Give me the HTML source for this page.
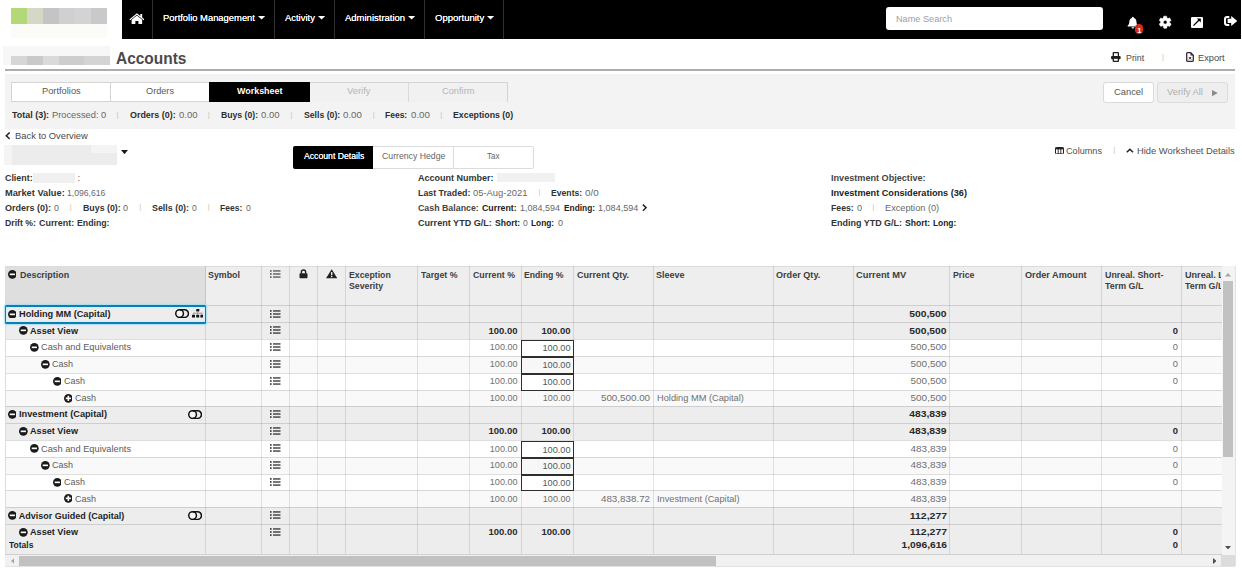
<!DOCTYPE html>
<html><head><meta charset="utf-8"><title>Accounts</title>
<style>
html,body{margin:0;padding:0;background:#fff;}
body{width:1242px;height:572px;position:relative;overflow:hidden;font-family:"Liberation Sans",sans-serif;}
.t{position:absolute;white-space:nowrap;}
.b{position:absolute;display:block;}
</style></head><body>
<div class="b" style="left:121.6px;top:0px;width:1119.6px;height:38.5px;background:#000;"></div>
<div class="b" style="left:11px;top:8px;width:16px;height:16px;background:#b3d877;"></div>
<div class="b" style="left:27px;top:8px;width:16px;height:16px;background:#d3d9c6;"></div>
<div class="b" style="left:43px;top:8px;width:16px;height:16px;background:#c4c4c6;"></div>
<div class="b" style="left:59px;top:8px;width:16px;height:16px;background:#d0d0d2;"></div>
<div class="b" style="left:75px;top:8px;width:16px;height:16px;background:#d3d3d5;"></div>
<div class="b" style="left:91px;top:8px;width:16px;height:16px;background:#c9c9cb;"></div>
<div class="b" style="left:11px;top:24px;width:96px;height:14px;background:#fbfbf7;"></div>
<div class="b" style="left:151.7px;top:0px;width:1px;height:38.5px;background:#303030;"></div>
<div class="b" style="left:274.1px;top:0px;width:1px;height:38.5px;background:#303030;"></div>
<div class="b" style="left:334.3px;top:0px;width:1px;height:38.5px;background:#303030;"></div>
<div class="b" style="left:423.8px;top:0px;width:1px;height:38.5px;background:#303030;"></div>
<div class="b" style="left:502.8px;top:0px;width:1px;height:38.5px;background:#303030;"></div>
<svg class="b" style="left:128.7px;top:12.6px" width="15.8" height="11.8" viewBox="0 0 17 13"><path d="M8.5 2.7 2.7 7.4V12.6h4.1V8.9h3.4v3.7h4.100V7.400z" fill="#fff"/><path d="M8.5 0.300 0.200 7.100l0.900 1L8.500 2 15.900 8.100l0.900-1-2.500-2.100V1.100h-2v2.200z" fill="#fff"/></svg>
<span class="t" style="left:162.5px;top:12px;font-size:9.2px;line-height:12px;color:#fff;transform:scaleX(1.023);transform-origin:0 0;text-shadow:0 0 .3px #fff;">Portfolio Management</span>
<span class="t" style="left:284.9px;top:12px;font-size:9.2px;line-height:12px;color:#fff;transform:scaleX(1.026);transform-origin:0 0;text-shadow:0 0 .3px #fff;">Activity</span>
<span class="t" style="left:344.8px;top:12px;font-size:9.2px;line-height:12px;color:#fff;transform:scaleX(1.033);transform-origin:0 0;text-shadow:0 0 .3px #fff;">Administration</span>
<span class="t" style="left:434.6px;top:12px;font-size:9.2px;line-height:12px;color:#fff;transform:scaleX(1.037);transform-origin:0 0;text-shadow:0 0 .3px #fff;">Opportunity</span>
<svg class="b" style="left:257.8px;top:16.4px" width="7.2" height="3.6" viewBox="0 0 7 3.5"><path d="M0 0h7L3.500 3.500z" fill="#fff"/></svg>
<svg class="b" style="left:318px;top:16.4px" width="7.2" height="3.6" viewBox="0 0 7 3.5"><path d="M0 0h7L3.500 3.500z" fill="#fff"/></svg>
<svg class="b" style="left:408.2px;top:16.4px" width="7.2" height="3.6" viewBox="0 0 7 3.5"><path d="M0 0h7L3.500 3.500z" fill="#fff"/></svg>
<svg class="b" style="left:487.1px;top:16.4px" width="7.2" height="3.6" viewBox="0 0 7 3.5"><path d="M0 0h7L3.500 3.500z" fill="#fff"/></svg>
<div class="b" style="left:886px;top:7px;width:216.5px;height:22.5px;background:#fff;border-radius:3px;"></div>
<span class="t" style="left:896px;top:13px;font-size:9px;line-height:12px;color:#a0a0a0;transform:scaleX(1.018);transform-origin:0 0;">Name Search</span>
<svg class="b" style="left:1127.1px;top:15.6px" width="11.8" height="13.6" viewBox="0 0 13 14"><path d="M6.500 0.300c-.6 0-1 .4-1 1v.4C3.600 2.200 2.600 3.800 2.600 5.700c0 2.600-.9 3.700-1.900 4.600v.8h11.600v-.8c-1-.9-1.900-2-1.900-4.600 0-1.900-1-3.500-2.900-4V1.300c0-.6-.4-1-1-1zM5 11.900c0 .8.700 1.500 1.500 1.500S8 12.700 8 11.900z" fill="#fff"/></svg>
<div class="b" style="left:1135.2px;top:24.2px;width:8.2px;height:10.2px;background:#d9291c;border-radius:4.100px;"></div>
<span class="t" style="left:1137.2px;top:25px;font-size:7.5px;line-height:11px;color:#fff;font-weight:700;">1</span>
<svg class="b" style="left:1158.2px;top:15.3px" width="14.4" height="14.4" viewBox="0 0 24 24"><path d="M19.400 13c.04-.3.060-.7.060-1s-.02-.7-.07-1l2.100-1.650c.19-.15.240-.42.120-.64l-2-3.460c-.12-.22-.39-.3-.61-.22l-2.490 1c-.52-.4-1.080-.73-1.690-.98l-.38-2.650A.49.49 0 0 0 14 2h-4c-.25 0-.46.180-.49.420l-.38 2.650c-.61.250-1.170.59-1.690.98l-2.490-1c-.23-.09-.49 0-.61.220l-2 3.460c-.13.220-.07.490.12.640L4.570 11c-.04.300-.07.650-.07 1s.02.700.07 1l-2.110 1.650c-.19.150-.24.420-.12.640l2 3.460c.12.220.39.300.61.220l2.490-1c.52.400 1.080.73 1.690.98l.38 2.650c.03.240.24.420.49.420h4c.25 0 .46-.18.490-.42l.38-2.650c.61-.25 1.170-.59 1.690-.98l2.490 1c.23.090.49 0 .61-.22l2-3.460c.12-.22.070-.49-.12-.64L19.400 13zM12 15.300A3.300 3.300 0 1 1 12 8.700a3.300 3.300 0 0 1 0 6.600z" fill="#fff" stroke="#fff" stroke-width="1.1"/></svg>
<svg class="b" style="left:1190.7px;top:16.9px" width="12" height="11" viewBox="0 0 12 11"><rect x="0" y="0" width="12" height="11" rx="1" fill="#fff"/><path d="M2.500 8.600 8.300 2.800" stroke="#000" stroke-width="1.300" fill="none"/><path d="M5.800 1.500h4v4z" fill="#000"/></svg>
<svg class="b" style="left:1223.7px;top:15.9px" width="13.4" height="9.9" viewBox="0 0 13.400 9.900"><path d="M5.300 1H3.200C2 1 1 2 1 3.200v3.500c0 1.200 1 2.200 2.200 2.200h2.100" fill="none" stroke="#fff" stroke-width="2"/><path d="M7.200 0 13.400 4.950 7.200 9.900V7.050H3.600V2.850h3.600z" fill="#fff"/></svg>
<div class="b" style="left:3px;top:46px;width:107px;height:19.4px;background:#f7f7f7;"></div>
<div class="b" style="left:11px;top:56px;width:16px;height:9px;background:#d6d6d6;"></div>
<div class="b" style="left:27px;top:56px;width:16px;height:9px;background:#c9c9c9;"></div>
<div class="b" style="left:43px;top:56px;width:16px;height:9px;background:#dadada;"></div>
<div class="b" style="left:59px;top:56px;width:25px;height:9px;background:#cdcdcd;"></div>
<div class="b" style="left:84px;top:56px;width:26px;height:9px;background:#d4d4d4;"></div>
<span class="t" style="left:115.5px;top:48px;font-size:16.5px;line-height:20px;color:#4a4a4e;font-weight:700;transform:scaleX(0.936);transform-origin:0 0;">Accounts</span>
<div class="b" style="left:4.5px;top:69px;width:1230.8px;height:2px;background:#adadad;"></div>
<svg class="b" style="left:1111px;top:52px" width="9.7" height="10" viewBox="0 0 9.700 10"><rect x="2.300" y=".65" width="5.100" height="4" rx=".5" fill="#fff" stroke="#1d1d1d" stroke-width="1.300"/><rect x="0" y="4" width="9.700" height="3.200" rx="1.300" fill="#1d1d1d"/><rect x="2.300" y="6.200" width="5.100" height="3.150" rx=".4" fill="#fff" stroke="#1d1d1d" stroke-width="1.300"/></svg>
<span class="t" style="left:1125.5px;top:51px;font-size:9.5px;line-height:13px;color:#4a4a4a;transform:scaleX(0.932);transform-origin:0 0;">Print</span>
<span class="t" style="left:1162.0px;top:51px;font-size:7.5px;line-height:11px;color:#c2c2c2;">|</span>
<svg class="b" style="left:1186px;top:52px" width="8" height="10" viewBox="0 0 8 10"><path d="M1.500 .7h3.200l2.600 2.600v5.200a.8.8 0 0 1-.8.8H1.500a.8.800 0 0 1-.8-.8V1.500a.8.800 0 0 1 .8-.8z" fill="#fff" stroke="#33283c" stroke-width="1.300"/><path d="M4.500 .5v3h3z" fill="#33283c"/><path d="M2.800 5l2.400 2.500M5.200 5 2.800 7.500" stroke="#222" stroke-width="1" fill="none"/></svg>
<span class="t" style="left:1198.2px;top:51px;font-size:9.5px;line-height:13px;color:#4a4a4a;transform:scaleX(0.972);transform-origin:0 0;">Export</span>
<div class="b" style="left:4.8px;top:74.3px;width:1230.2px;height:54.4px;background:#f3f3f3;"></div>
<div class="b" style="left:11.2px;top:81.7px;width:496.4px;height:20.6px;background:#fff;border:1px solid #d4d4d4;box-sizing:border-box;"></div>
<div class="b" style="left:209.2px;top:81.7px;width:100.4px;height:20.6px;background:#000;"></div>
<div class="b" style="left:309.6px;top:82.5px;width:197.2px;height:19px;background:#f1f1f1;"></div>
<div class="b" style="left:110.1px;top:82px;width:1px;height:20px;background:#d4d4d4;"></div>
<div class="b" style="left:407.7px;top:82px;width:1px;height:20px;background:#dadada;"></div>
<span class="t" style="left:41.7px;top:85px;font-size:9px;line-height:12px;color:#585858;transform:scaleX(1.032);transform-origin:0 0;">Portfolios</span>
<span class="t" style="left:146px;top:85px;font-size:9px;line-height:12px;color:#585858;transform:scaleX(1.018);transform-origin:0 0;">Orders</span>
<span class="t" style="left:236.6px;top:85px;font-size:9px;line-height:12px;color:#fff;font-weight:700;transform:scaleX(0.992);transform-origin:0 0;">Worksheet</span>
<span class="t" style="left:346.9px;top:85px;font-size:9px;line-height:12px;color:#b5b5b5;transform:scaleX(1.04);transform-origin:0 0;">Verify</span>
<span class="t" style="left:441.7px;top:85px;font-size:9px;line-height:12px;color:#b5b5b5;transform:scaleX(1.032);transform-origin:0 0;">Confirm</span>
<div class="b" style="left:1103.2px;top:82px;width:50.4px;height:21.2px;background:#fff;border:1px solid #dadada;box-sizing:border-box;border-radius:3px;"></div>
<span class="t" style="left:1113.9px;top:86px;font-size:9px;line-height:12px;color:#555;transform:scaleX(1.039);transform-origin:0 0;">Cancel</span>
<div class="b" style="left:1156.5px;top:82px;width:71.5px;height:21.2px;background:#eeeeee;border:1px solid #dcdcdc;box-sizing:border-box;border-radius:3px;"></div>
<span class="t" style="left:1166.7px;top:86px;font-size:9px;line-height:12px;color:#b0b0b0;transform:scaleX(1.04);transform-origin:0 0;">Verify All</span>
<svg class="b" style="left:1212.1px;top:89.7px" width="5.8" height="6.2" viewBox="0 0 5.800 6.200"><path d="M0 0l5.800 3.100L0 6.200z" fill="#8a8a8a"/></svg>
<span class="t" style="left:12.1px;top:109px;font-size:9px;line-height:12px;color:#2e2e2e;font-weight:700;transform:scaleX(0.994);transform-origin:0 0;">Total (3):</span>
<span class="t" style="left:51.9px;top:109px;font-size:9px;line-height:12px;color:#686868;transform:scaleX(1.032);transform-origin:0 0;">Processed: 0</span>
<span class="t" style="left:116.6px;top:109px;font-size:7.5px;line-height:11px;color:#c2c2c2;">|</span>
<span class="t" style="left:129.8px;top:109px;font-size:9px;line-height:12px;color:#2e2e2e;font-weight:700;transform:scaleX(0.991);transform-origin:0 0;">Orders (0):</span>
<span class="t" style="left:178.6px;top:109px;font-size:9px;line-height:12px;color:#686868;transform:scaleX(1.062);transform-origin:0 0;">0.00</span>
<span class="t" style="left:207.7px;top:109px;font-size:7.5px;line-height:11px;color:#c2c2c2;">|</span>
<span class="t" style="left:220.8px;top:109px;font-size:9px;line-height:12px;color:#2e2e2e;font-weight:700;transform:scaleX(0.963);transform-origin:0 0;">Buys (0):</span>
<span class="t" style="left:261.3px;top:109px;font-size:9px;line-height:12px;color:#686868;transform:scaleX(1.05);transform-origin:0 0;">0.00</span>
<span class="t" style="left:290.6px;top:109px;font-size:7.5px;line-height:11px;color:#c2c2c2;">|</span>
<span class="t" style="left:303.6px;top:109px;font-size:9px;line-height:12px;color:#2e2e2e;font-weight:700;transform:scaleX(0.965);transform-origin:0 0;">Sells (0):</span>
<span class="t" style="left:342.9px;top:109px;font-size:9px;line-height:12px;color:#686868;transform:scaleX(1.079);transform-origin:0 0;">0.00</span>
<span class="t" style="left:372.7px;top:109px;font-size:7.5px;line-height:11px;color:#c2c2c2;">|</span>
<span class="t" style="left:385.2px;top:109px;font-size:9px;line-height:12px;color:#2e2e2e;font-weight:700;transform:scaleX(0.944);transform-origin:0 0;">Fees:</span>
<span class="t" style="left:410.5px;top:109px;font-size:9px;line-height:12px;color:#686868;transform:scaleX(1.079);transform-origin:0 0;">0.00</span>
<span class="t" style="left:440.3px;top:109px;font-size:7.5px;line-height:11px;color:#c2c2c2;">|</span>
<span class="t" style="left:452.8px;top:109px;font-size:9px;line-height:12px;color:#2e2e2e;font-weight:700;transform:scaleX(0.977);transform-origin:0 0;">Exceptions (0)</span>
<svg class="b" style="left:5px;top:132.4px" width="5.4" height="7.4" viewBox="0 0 5.400 7.400"><path d="M4.700 .5 1.300 3.700 4.700 6.900" fill="none" stroke="#222" stroke-width="1.500"/></svg>
<span class="t" style="left:14.7px;top:130px;font-size:9px;line-height:12px;color:#4a4a4a;transform:scaleX(1.04);transform-origin:0 0;">Back to Overview</span>
<div class="b" style="left:3.5px;top:144.5px;width:113.5px;height:20.5px;background:#ececec;"></div>
<div class="b" style="left:91px;top:144.5px;width:26px;height:8px;background:#f4f4f4;"></div>
<div class="b" style="left:3.5px;top:144.5px;width:8px;height:20.5px;background:#f4f4f4;"></div>
<svg class="b" style="left:121.1px;top:150.1px" width="7" height="4.2" viewBox="0 0 7 4.200"><path d="M0 0h7L3.500 4.200z" fill="#1a1a1a"/></svg>
<div class="b" style="left:293.4px;top:145.9px;width:240.3px;height:22.8px;background:#fff;border:1px solid #dcdcdc;box-sizing:border-box;border-radius:2px;"></div>
<div class="b" style="left:293.4px;top:145.9px;width:80.1px;height:22.8px;background:#000;border-radius:2px 0 0 2px;"></div>
<div class="b" style="left:453px;top:147px;width:1px;height:20.6px;background:#dcdcdc;"></div>
<span class="t" style="left:303.8px;top:150px;font-size:9px;line-height:12px;color:#fff;transform:scaleX(0.964);transform-origin:0 0;text-shadow:0 0 .4px #fff;">Account Details</span>
<span class="t" style="left:381.7px;top:150px;font-size:9px;line-height:12px;color:#666;transform:scaleX(0.967);transform-origin:0 0;">Currency Hedge</span>
<span class="t" style="left:487px;top:150px;font-size:9px;line-height:12px;color:#666;transform:scaleX(0.9);transform-origin:0 0;">Tax</span>
<svg class="b" style="left:1055px;top:146.7px" width="9" height="7.4" viewBox="0 0 9 7.400"><rect x=".5" y=".5" width="8" height="6.400" rx=".8" fill="#fff" stroke="#222"/><rect x=".5" y=".5" width="8" height="1.900" fill="#222"/><path d="M3.200 2v5M5.800 2v5" stroke="#222" stroke-width=".9"/></svg>
<span class="t" style="left:1066.3px;top:144px;font-size:9.5px;line-height:13px;color:#505050;transform:scaleX(0.96);transform-origin:0 0;">Columns</span>
<span class="t" style="left:1113.3px;top:144px;font-size:7.5px;line-height:11px;color:#c2c2c2;">|</span>
<svg class="b" style="left:1126.2px;top:147.9px" width="7.8" height="5" viewBox="0 0 7.800 5"><path d="M.8 4.300 3.900 1.200 7 4.300" fill="none" stroke="#222" stroke-width="1.500"/></svg>
<span class="t" style="left:1137.1px;top:144px;font-size:9.5px;line-height:13px;color:#505050;transform:scaleX(0.986);transform-origin:0 0;">Hide Worksheet Details</span>
<span class="t" style="left:4.8px;top:171px;font-size:9.5px;line-height:13px;color:#333;font-weight:700;transform:scaleX(0.934);transform-origin:0 0;">Client:</span>
<div class="b" style="left:32.9px;top:172.5px;width:42.5px;height:10px;background:#f0f0f0;"></div>
<span class="t" style="left:77.5px;top:171px;font-size:9.5px;line-height:13px;color:#686868;">:</span>
<span class="t" style="left:4.8px;top:186px;font-size:9.5px;line-height:13px;color:#333;font-weight:700;transform:scaleX(0.975);transform-origin:0 0;">Market Value:</span>
<span class="t" style="left:67.4px;top:186px;font-size:9.5px;line-height:13px;color:#686868;transform:scaleX(0.906);transform-origin:0 0;">1,096,616</span>
<span class="t" style="left:4.8px;top:201px;font-size:9.5px;line-height:13px;color:#333;font-weight:700;transform:scaleX(0.949);transform-origin:0 0;">Orders (0):</span>
<span class="t" style="left:54px;top:201px;font-size:9.5px;line-height:13px;color:#686868;transform:scaleX(0.946);transform-origin:0 0;">0</span>
<span class="t" style="left:69.8px;top:201px;font-size:7.5px;line-height:11px;color:#c2c2c2;">|</span>
<span class="t" style="left:82.7px;top:201px;font-size:9.5px;line-height:13px;color:#333;font-weight:700;transform:scaleX(0.928);transform-origin:0 0;">Buys (0):</span>
<span class="t" style="left:123.1px;top:201px;font-size:9.5px;line-height:13px;color:#686868;transform:scaleX(0.946);transform-origin:0 0;">0</span>
<span class="t" style="left:139.3px;top:201px;font-size:7.5px;line-height:11px;color:#c2c2c2;">|</span>
<span class="t" style="left:151.8px;top:201px;font-size:9.5px;line-height:13px;color:#333;font-weight:700;transform:scaleX(0.934);transform-origin:0 0;">Sells (0):</span>
<span class="t" style="left:192px;top:201px;font-size:9.5px;line-height:13px;color:#686868;transform:scaleX(0.908);transform-origin:0 0;">0</span>
<span class="t" style="left:207.7px;top:201px;font-size:7.5px;line-height:11px;color:#c2c2c2;">|</span>
<span class="t" style="left:220.2px;top:201px;font-size:9.5px;line-height:13px;color:#333;font-weight:700;transform:scaleX(0.895);transform-origin:0 0;">Fees:</span>
<span class="t" style="left:246px;top:201px;font-size:9.5px;line-height:13px;color:#686868;transform:scaleX(0.908);transform-origin:0 0;">0</span>
<span class="t" style="left:4.8px;top:216px;font-size:9.5px;line-height:13px;color:#333;font-weight:700;transform:scaleX(0.912);transform-origin:0 0;">Drift %:</span>
<span class="t" style="left:39.1px;top:216px;font-size:9.5px;line-height:13px;color:#333;font-weight:700;transform:scaleX(0.939);transform-origin:0 0;">Current:</span>
<span class="t" style="left:76.8px;top:216px;font-size:9.5px;line-height:13px;color:#333;font-weight:700;transform:scaleX(0.919);transform-origin:0 0;">Ending:</span>
<span class="t" style="left:417.65px;top:171px;font-size:9.5px;line-height:13px;color:#333;font-weight:700;transform:scaleX(0.947);transform-origin:0 0;">Account Number:</span>
<div class="b" style="left:496.5px;top:173px;width:58.5px;height:8.7px;background:#f1f1f1;"></div>
<span class="t" style="left:417.65px;top:186px;font-size:9.5px;line-height:13px;color:#333;font-weight:700;transform:scaleX(0.927);transform-origin:0 0;">Last Traded:</span>
<span class="t" style="left:473.4px;top:186px;font-size:9.5px;line-height:13px;color:#686868;transform:scaleX(0.99);transform-origin:0 0;">05-Aug-2021</span>
<span class="t" style="left:538.4px;top:186px;font-size:7.5px;line-height:11px;color:#c2c2c2;">|</span>
<span class="t" style="left:550.9px;top:186px;font-size:9.5px;line-height:13px;color:#333;font-weight:700;transform:scaleX(0.909);transform-origin:0 0;">Events:</span>
<span class="t" style="left:585.1px;top:186px;font-size:9.5px;line-height:13px;color:#686868;transform:scaleX(1.037);transform-origin:0 0;">0/0</span>
<span class="t" style="left:417.65px;top:201px;font-size:9.5px;line-height:13px;color:#444;font-weight:700;transform:scaleX(0.928);transform-origin:0 0;">Cash Balance:</span>
<span class="t" style="left:482px;top:201px;font-size:9.5px;line-height:13px;color:#222;font-weight:700;transform:scaleX(0.926);transform-origin:0 0;">Current:</span>
<span class="t" style="left:520.1px;top:201px;font-size:9.5px;line-height:13px;color:#686868;transform:scaleX(0.944);transform-origin:0 0;">1,084,594</span>
<span class="t" style="left:563.6px;top:201px;font-size:9.5px;line-height:13px;color:#222;font-weight:700;transform:scaleX(0.877);transform-origin:0 0;">Ending:</span>
<span class="t" style="left:598.2px;top:201px;font-size:9.5px;line-height:13px;color:#686868;transform:scaleX(0.954);transform-origin:0 0;">1,084,594</span>
<svg class="b" style="left:641.9px;top:204.4px" width="5.2" height="7.4" viewBox="0 0 5.200 7.400"><path d="M.9 .6 4.100 3.700 .9 6.800" fill="none" stroke="#222" stroke-width="1.500"/></svg>
<span class="t" style="left:417.65px;top:216px;font-size:9.5px;line-height:13px;color:#333;font-weight:700;transform:scaleX(0.954);transform-origin:0 0;">Current YTD G/L:</span>
<span class="t" style="left:494.5px;top:216px;font-size:9.5px;line-height:13px;color:#222;font-weight:700;transform:scaleX(0.901);transform-origin:0 0;">Short:</span>
<span class="t" style="left:523.1px;top:216px;font-size:9.5px;line-height:13px;color:#686868;transform:scaleX(0.89);transform-origin:0 0;">0</span>
<span class="t" style="left:531.2px;top:216px;font-size:9.5px;line-height:13px;color:#222;font-weight:700;transform:scaleX(0.876);transform-origin:0 0;">Long:</span>
<span class="t" style="left:558px;top:216px;font-size:9.5px;line-height:13px;color:#686868;transform:scaleX(0.946);transform-origin:0 0;">0</span>
<span class="t" style="left:830.5px;top:171px;font-size:9.5px;line-height:13px;color:#444;font-weight:700;transform:scaleX(0.958);transform-origin:0 0;">Investment Objective:</span>
<span class="t" style="left:830.5px;top:186px;font-size:9.5px;line-height:13px;color:#222;font-weight:700;transform:scaleX(0.961);transform-origin:0 0;">Investment Considerations (36)</span>
<span class="t" style="left:830.5px;top:201px;font-size:9.5px;line-height:13px;color:#333;font-weight:700;transform:scaleX(0.915);transform-origin:0 0;">Fees:</span>
<span class="t" style="left:856.6px;top:201px;font-size:9.5px;line-height:13px;color:#686868;transform:scaleX(0.965);transform-origin:0 0;">0</span>
<span class="t" style="left:872.3px;top:201px;font-size:7.5px;line-height:11px;color:#c2c2c2;">|</span>
<span class="t" style="left:885px;top:201px;font-size:9.5px;line-height:13px;color:#686868;transform:scaleX(0.968);transform-origin:0 0;">Exception (0)</span>
<span class="t" style="left:830.5px;top:216px;font-size:9.5px;line-height:13px;color:#333;font-weight:700;transform:scaleX(0.943);transform-origin:0 0;">Ending YTD G/L:</span>
<span class="t" style="left:904.5px;top:216px;font-size:9.5px;line-height:13px;color:#222;font-weight:700;transform:scaleX(0.901);transform-origin:0 0;">Short:</span>
<span class="t" style="left:933.3px;top:216px;font-size:9.5px;line-height:13px;color:#222;font-weight:700;transform:scaleX(0.88);transform-origin:0 0;">Long:</span>
<div class="b" style="left:5px;top:266.2px;width:1217px;height:288.4px;background:#fff;"></div>
<div class="b" style="left:5px;top:266.2px;width:1217px;height:39.4px;background:#eeeeee;"></div>
<div class="b" style="left:5px;top:266.2px;width:200.5px;height:39.4px;background:#dedede;"></div>
<div class="b" style="left:5px;top:305px;width:1217px;height:17px;background:#ededed;"></div>
<div class="b" style="left:5px;top:322px;width:1217px;height:17px;background:#ededed;"></div>
<div class="b" style="left:5px;top:356px;width:1217px;height:17px;background:#f9f9f9;"></div>
<div class="b" style="left:5px;top:390px;width:1217px;height:16px;background:#f9f9f9;"></div>
<div class="b" style="left:5px;top:406px;width:1217px;height:17px;background:#ededed;"></div>
<div class="b" style="left:5px;top:423px;width:1217px;height:17px;background:#ededed;"></div>
<div class="b" style="left:5px;top:457px;width:1217px;height:17px;background:#f9f9f9;"></div>
<div class="b" style="left:5px;top:490px;width:1217px;height:17px;background:#f9f9f9;"></div>
<div class="b" style="left:5px;top:507px;width:1217px;height:17px;background:#ededed;"></div>
<div class="b" style="left:5px;top:524px;width:1217px;height:31px;background:#ededed;"></div>
<div class="b" style="left:5px;top:305px;width:1217px;height:1px;background:rgba(0,0,0,.13);"></div>
<div class="b" style="left:5px;top:322px;width:1217px;height:1px;background:rgba(0,0,0,.13);"></div>
<div class="b" style="left:5px;top:339px;width:1217px;height:1px;background:rgba(0,0,0,.13);"></div>
<div class="b" style="left:5px;top:356px;width:1217px;height:1px;background:rgba(0,0,0,.13);"></div>
<div class="b" style="left:5px;top:373px;width:1217px;height:1px;background:rgba(0,0,0,.13);"></div>
<div class="b" style="left:5px;top:390px;width:1217px;height:1px;background:rgba(0,0,0,.13);"></div>
<div class="b" style="left:5px;top:406px;width:1217px;height:1px;background:rgba(0,0,0,.13);"></div>
<div class="b" style="left:5px;top:423px;width:1217px;height:1px;background:rgba(0,0,0,.13);"></div>
<div class="b" style="left:5px;top:440px;width:1217px;height:1px;background:rgba(0,0,0,.13);"></div>
<div class="b" style="left:5px;top:457px;width:1217px;height:1px;background:rgba(0,0,0,.13);"></div>
<div class="b" style="left:5px;top:474px;width:1217px;height:1px;background:rgba(0,0,0,.13);"></div>
<div class="b" style="left:5px;top:490px;width:1217px;height:1px;background:rgba(0,0,0,.13);"></div>
<div class="b" style="left:5px;top:507px;width:1217px;height:1px;background:rgba(0,0,0,.13);"></div>
<div class="b" style="left:5px;top:524px;width:1217px;height:1px;background:rgba(0,0,0,.13);"></div>
<div class="b" style="left:5px;top:265.7px;width:1230.3px;height:1px;background:#dcdcdc;"></div>
<div class="b" style="left:205.0px;top:266.2px;width:1px;height:288.4px;background:rgba(0,0,0,.105);"></div>
<div class="b" style="left:261.0px;top:266.2px;width:1px;height:288.4px;background:rgba(0,0,0,.105);"></div>
<div class="b" style="left:289.1px;top:266.2px;width:1px;height:288.4px;background:rgba(0,0,0,.105);"></div>
<div class="b" style="left:317.0px;top:266.2px;width:1px;height:288.4px;background:rgba(0,0,0,.105);"></div>
<div class="b" style="left:345.1px;top:266.2px;width:1px;height:288.4px;background:rgba(0,0,0,.105);"></div>
<div class="b" style="left:416.9px;top:266.2px;width:1px;height:288.4px;background:rgba(0,0,0,.105);"></div>
<div class="b" style="left:469.1px;top:266.2px;width:1px;height:288.4px;background:rgba(0,0,0,.105);"></div>
<div class="b" style="left:521.1px;top:266.2px;width:1px;height:288.4px;background:rgba(0,0,0,.105);"></div>
<div class="b" style="left:573.2px;top:266.2px;width:1px;height:288.4px;background:rgba(0,0,0,.105);"></div>
<div class="b" style="left:652.7px;top:266.2px;width:1px;height:288.4px;background:rgba(0,0,0,.105);"></div>
<div class="b" style="left:773.2px;top:266.2px;width:1px;height:288.4px;background:rgba(0,0,0,.105);"></div>
<div class="b" style="left:853.1px;top:266.2px;width:1px;height:288.4px;background:rgba(0,0,0,.105);"></div>
<div class="b" style="left:949.0px;top:266.2px;width:1px;height:288.4px;background:rgba(0,0,0,.105);"></div>
<div class="b" style="left:1021.2px;top:266.2px;width:1px;height:288.4px;background:rgba(0,0,0,.105);"></div>
<div class="b" style="left:1101.1px;top:266.2px;width:1px;height:288.4px;background:rgba(0,0,0,.105);"></div>
<div class="b" style="left:1181.0px;top:266.2px;width:1px;height:288.4px;background:rgba(0,0,0,.105);"></div>
<div class="b" style="left:4.5px;top:266.2px;width:1px;height:300.4px;background:#dcdcdc;"></div>
<svg class="b" style="left:7.6px;top:269.85px" width="8.7" height="8.7" viewBox="0 0 10 10"><circle cx="5" cy="5" r="5" fill="#1a1a1a"/><rect x="2" y="4.050" width="6" height="1.900" fill="#fff"/></svg>
<span class="t" style="left:20px;top:269px;font-size:9px;line-height:12px;color:#3d3d3d;font-weight:700;transform:scaleX(0.992);transform-origin:0 0;">Description</span>
<span class="t" style="left:208px;top:269px;font-size:9px;line-height:12px;color:#3d3d3d;font-weight:700;transform:scaleX(0.984);transform-origin:0 0;">Symbol</span>
<svg class="b" style="left:270px;top:270.1px" width="10.5" height="8" viewBox="0 0 10.500 8"><g fill="#4a4a4a"><rect x="0" y="0.200" width="1.600" height="1.500"/><rect x="0" y="3.250" width="1.600" height="1.500"/><rect x="0" y="6.300" width="1.600" height="1.500"/><rect x="3" y="0.350" width="7.500" height="1.200"/><rect x="3" y="3.400" width="7.500" height="1.200"/><rect x="3" y="6.450" width="7.500" height="1.200"/></g></svg>
<svg class="b" style="left:298.7px;top:269.1px" width="9" height="9.5" viewBox="0 0 9.200 9.200"><path d="M2.400 4.300V3a2.200 2.200 0 0 1 4.400 0v1.300" fill="none" stroke="#222" stroke-width="1.400"/><rect x=".5" y="4.100" width="8.200" height="5.100" rx=".8" fill="#222"/></svg>
<svg class="b" style="left:325.6px;top:269.1px" width="11.4" height="9.5" viewBox="0 0 11.600 9.200"><path d="M5.800 0 11.600 9.200H0z" fill="#222"/><rect x="5.150" y="2.900" width="1.300" height="3.200" fill="#fff"/><rect x="5.150" y="6.800" width="1.300" height="1.300" fill="#fff"/></svg>
<span class="t" style="left:348.5px;top:269px;font-size:9px;line-height:12px;color:#3d3d3d;font-weight:700;transform:scaleX(0.97);transform-origin:0 0;">Exception</span>
<span class="t" style="left:348.5px;top:280px;font-size:9px;line-height:12px;color:#3d3d3d;font-weight:700;transform:scaleX(0.971);transform-origin:0 0;">Severity</span>
<span class="t" style="left:420.6px;top:269px;font-size:9px;line-height:12px;color:#3d3d3d;font-weight:700;transform:scaleX(0.98);transform-origin:0 0;">Target %</span>
<span class="t" style="left:472.7px;top:269px;font-size:9px;line-height:12px;color:#3d3d3d;font-weight:700;transform:scaleX(0.977);transform-origin:0 0;">Current %</span>
<span class="t" style="left:524.2px;top:269px;font-size:9px;line-height:12px;color:#3d3d3d;font-weight:700;transform:scaleX(0.963);transform-origin:0 0;">Ending %</span>
<span class="t" style="left:576.5px;top:269px;font-size:9px;line-height:12px;color:#3d3d3d;font-weight:700;transform:scaleX(1.005);transform-origin:0 0;">Current Qty.</span>
<span class="t" style="left:656.4px;top:269px;font-size:9px;line-height:12px;color:#3d3d3d;font-weight:700;transform:scaleX(0.996);transform-origin:0 0;">Sleeve</span>
<span class="t" style="left:776.3px;top:269px;font-size:9px;line-height:12px;color:#3d3d3d;font-weight:700;transform:scaleX(1.01);transform-origin:0 0;">Order Qty.</span>
<span class="t" style="left:856.1px;top:269px;font-size:9px;line-height:12px;color:#3d3d3d;font-weight:700;transform:scaleX(1.037);transform-origin:0 0;">Current MV</span>
<span class="t" style="left:952.6px;top:269px;font-size:9px;line-height:12px;color:#3d3d3d;font-weight:700;transform:scaleX(0.972);transform-origin:0 0;">Price</span>
<span class="t" style="left:1024.7px;top:269px;font-size:9px;line-height:12px;color:#3d3d3d;font-weight:700;transform:scaleX(1.014);transform-origin:0 0;">Order Amount</span>
<span class="t" style="left:1105.1px;top:269px;font-size:9px;line-height:12px;color:#3d3d3d;font-weight:700;transform:scaleX(0.983);transform-origin:0 0;">Unreal. Short-</span>
<span class="t" style="left:1105.1px;top:280px;font-size:9px;line-height:12px;color:#3d3d3d;font-weight:700;transform:scaleX(0.989);transform-origin:0 0;">Term G/L</span>
<div class="b" style="left:1182px;top:267px;width:38.600px;height:38px;overflow:hidden">
<span class="t" style="left:3px;top:2px;font-size:9px;line-height:12px;color:#3d3d3d;font-weight:700;transform:scaleX(1.009);transform-origin:0 0;">Unreal. Long-</span>
<span class="t" style="left:3px;top:13px;font-size:9px;line-height:12px;color:#3d3d3d;font-weight:700;transform:scaleX(0.989);transform-origin:0 0;">Term G/L</span>
</div>
<svg class="b" style="left:7.8px;top:309.5px" width="8.7" height="8.7" viewBox="0 0 10 10"><circle cx="5" cy="5" r="5" fill="#1a1a1a"/><rect x="2" y="4.050" width="6" height="1.900" fill="#fff"/></svg>
<span class="t" style="left:18.7px;top:308px;font-size:9px;line-height:12px;color:#1f1f1f;font-weight:700;transform:scaleX(1.022);transform-origin:0 0;">Holding MM (Capital)</span>
<svg class="b" style="left:270px;top:309.55px" width="10.5" height="8" viewBox="0 0 10.500 8"><g fill="#222"><rect x="0" y="0.200" width="1.600" height="1.500"/><rect x="0" y="3.250" width="1.600" height="1.500"/><rect x="0" y="6.300" width="1.600" height="1.500"/><rect x="3" y="0.350" width="7.500" height="1.200"/><rect x="3" y="3.400" width="7.500" height="1.200"/><rect x="3" y="6.450" width="7.500" height="1.200"/></g></svg>
<span class="t" style="right:295.4px;top:308px;font-size:9px;line-height:12px;color:#2a2a2a;font-weight:700;transform:scaleX(1.147);transform-origin:100% 0;">500,500</span>
<svg class="b" style="left:174.9px;top:308.65px" width="14.2" height="9.2" viewBox="0 0 14.200 9.200"><circle cx="4.600" cy="4.600" r="3.850" fill="#f7f5f5" stroke="#111" stroke-width="1.500"/><path d="M4.600 .75h5a3.850 3.850 0 0 1 0 7.700h-5" fill="none" stroke="#111" stroke-width="1.500"/></svg>
<svg class="b" style="left:191.8px;top:309.15px" width="11.4" height="8.6" viewBox="0 0 11.400 8.600"><g fill="#111"><rect x="4.200" y="0" width="3.100" height="2.400" rx=".4"/><rect x="0" y="5.700" width="3" height="2.900" rx=".4"/><rect x="4.200" y="5.700" width="3" height="2.900" rx=".4"/><rect x="8.400" y="5.700" width="3" height="2.900" rx=".4"/><rect x="5.400" y="2" width=".7" height="4" fill="#999"/><rect x="1.100" y="3.800" width="9.200" height=".7" fill="#777"/><rect x="1.100" y="3.800" width=".7" height="2.200" fill="#999"/><rect x="9.600" y="3.800" width=".7" height="2.200" fill="#999"/></g></svg>
<svg class="b" style="left:19.0px;top:326.3px" width="8.7" height="8.7" viewBox="0 0 10 10"><circle cx="5" cy="5" r="5" fill="#1a1a1a"/><rect x="2" y="4.050" width="6" height="1.900" fill="#fff"/></svg>
<span class="t" style="left:29.9px;top:325px;font-size:9px;line-height:12px;color:#1f1f1f;font-weight:700;transform:scaleX(1.013);transform-origin:0 0;">Asset View</span>
<svg class="b" style="left:270px;top:326.35px" width="10.5" height="8" viewBox="0 0 10.500 8"><g fill="#222"><rect x="0" y="0.200" width="1.600" height="1.500"/><rect x="0" y="3.250" width="1.600" height="1.500"/><rect x="0" y="6.300" width="1.600" height="1.500"/><rect x="3" y="0.350" width="7.500" height="1.200"/><rect x="3" y="3.400" width="7.500" height="1.200"/><rect x="3" y="6.450" width="7.500" height="1.200"/></g></svg>
<span class="t" style="right:724px;top:325px;font-size:9px;line-height:12px;color:#2a2a2a;font-weight:700;transform:scaleX(1.053);transform-origin:100% 0;">100.00</span>
<span class="t" style="right:671.5px;top:325px;font-size:9px;line-height:12px;color:#2a2a2a;font-weight:700;transform:scaleX(1.053);transform-origin:100% 0;">100.00</span>
<span class="t" style="right:295.4px;top:325px;font-size:9px;line-height:12px;color:#2a2a2a;font-weight:700;transform:scaleX(1.147);transform-origin:100% 0;">500,500</span>
<span class="t" style="right:64px;top:325px;font-size:9px;line-height:12px;color:#2a2a2a;font-weight:700;transform:scaleX(1.039);transform-origin:100% 0;">0</span>
<svg class="b" style="left:30.2px;top:343.2px" width="8.7" height="8.7" viewBox="0 0 10 10"><circle cx="5" cy="5" r="5" fill="#1a1a1a"/><rect x="2" y="4.050" width="6" height="1.900" fill="#fff"/></svg>
<span class="t" style="left:41.1px;top:341px;font-size:9px;line-height:12px;color:#5c5c5c;transform:scaleX(1.028);transform-origin:0 0;">Cash and Equivalents</span>
<svg class="b" style="left:270px;top:343.25px" width="10.5" height="8" viewBox="0 0 10.500 8"><g fill="#222"><rect x="0" y="0.200" width="1.600" height="1.500"/><rect x="0" y="3.250" width="1.600" height="1.500"/><rect x="0" y="6.300" width="1.600" height="1.500"/><rect x="3" y="0.350" width="7.500" height="1.200"/><rect x="3" y="3.400" width="7.500" height="1.200"/><rect x="3" y="6.450" width="7.500" height="1.200"/></g></svg>
<span class="t" style="right:724px;top:341px;font-size:9px;line-height:12px;color:#707070;transform:scaleX(1.006);transform-origin:100% 0;">100.00</span>
<div class="b" style="left:521.1px;top:340px;width:53.1px;height:17px;background:#fff;border:1px solid #2e2e2e;box-sizing:border-box;"></div>
<span class="t" style="right:671.5px;top:342px;font-size:9px;line-height:12px;color:#505a5e;transform:scaleX(1.021);transform-origin:100% 0;">100.00</span>
<span class="t" style="right:295.4px;top:341px;font-size:9px;line-height:12px;color:#707070;transform:scaleX(1.107);transform-origin:100% 0;">500,500</span>
<span class="t" style="right:64px;top:341px;font-size:9px;line-height:12px;color:#707070;transform:scaleX(1.039);transform-origin:100% 0;">0</span>
<svg class="b" style="left:41.4px;top:360.05px" width="8.7" height="8.7" viewBox="0 0 10 10"><circle cx="5" cy="5" r="5" fill="#1a1a1a"/><rect x="2" y="4.050" width="6" height="1.900" fill="#fff"/></svg>
<span class="t" style="left:52.3px;top:358px;font-size:9px;line-height:12px;color:#5c5c5c;transform:scaleX(0.999);transform-origin:0 0;">Cash</span>
<svg class="b" style="left:270px;top:360.1px" width="10.5" height="8" viewBox="0 0 10.500 8"><g fill="#222"><rect x="0" y="0.200" width="1.600" height="1.500"/><rect x="0" y="3.250" width="1.600" height="1.500"/><rect x="0" y="6.300" width="1.600" height="1.500"/><rect x="3" y="0.350" width="7.500" height="1.200"/><rect x="3" y="3.400" width="7.500" height="1.200"/><rect x="3" y="6.450" width="7.500" height="1.200"/></g></svg>
<span class="t" style="right:724px;top:358px;font-size:9px;line-height:12px;color:#707070;transform:scaleX(1.006);transform-origin:100% 0;">100.00</span>
<div class="b" style="left:521.1px;top:357px;width:53.1px;height:17px;background:#f7f7f7;border:1px solid #2e2e2e;box-sizing:border-box;"></div>
<span class="t" style="right:671.5px;top:359px;font-size:9px;line-height:12px;color:#505a5e;transform:scaleX(1.021);transform-origin:100% 0;">100.00</span>
<span class="t" style="right:295.4px;top:358px;font-size:9px;line-height:12px;color:#707070;transform:scaleX(1.107);transform-origin:100% 0;">500,500</span>
<span class="t" style="right:64px;top:358px;font-size:9px;line-height:12px;color:#707070;transform:scaleX(1.039);transform-origin:100% 0;">0</span>
<svg class="b" style="left:52.6px;top:377.0px" width="8.7" height="8.7" viewBox="0 0 10 10"><circle cx="5" cy="5" r="5" fill="#1a1a1a"/><rect x="2" y="4.050" width="6" height="1.900" fill="#fff"/></svg>
<span class="t" style="left:63.5px;top:375px;font-size:9px;line-height:12px;color:#5c5c5c;transform:scaleX(0.999);transform-origin:0 0;">Cash</span>
<svg class="b" style="left:270px;top:377.05px" width="10.5" height="8" viewBox="0 0 10.500 8"><g fill="#222"><rect x="0" y="0.200" width="1.600" height="1.500"/><rect x="0" y="3.250" width="1.600" height="1.500"/><rect x="0" y="6.300" width="1.600" height="1.500"/><rect x="3" y="0.350" width="7.500" height="1.200"/><rect x="3" y="3.400" width="7.500" height="1.200"/><rect x="3" y="6.450" width="7.500" height="1.200"/></g></svg>
<span class="t" style="right:724px;top:375px;font-size:9px;line-height:12px;color:#707070;transform:scaleX(1.006);transform-origin:100% 0;">100.00</span>
<div class="b" style="left:521.1px;top:374px;width:53.1px;height:17px;background:#fff;border:1px solid #2e2e2e;box-sizing:border-box;"></div>
<span class="t" style="right:671.5px;top:376px;font-size:9px;line-height:12px;color:#505a5e;transform:scaleX(1.021);transform-origin:100% 0;">100.00</span>
<span class="t" style="right:295.4px;top:375px;font-size:9px;line-height:12px;color:#707070;transform:scaleX(1.107);transform-origin:100% 0;">500,500</span>
<span class="t" style="right:64px;top:375px;font-size:9px;line-height:12px;color:#707070;transform:scaleX(1.039);transform-origin:100% 0;">0</span>
<svg class="b" style="left:63.8px;top:393.95px" width="8.7" height="8.7" viewBox="0 0 10 10"><circle cx="5" cy="5" r="5" fill="#1a1a1a"/><rect x="2" y="4.050" width="6" height="1.900" fill="#fff"/><rect x="4.050" y="2" width="1.900" height="6" fill="#fff"/></svg>
<span class="t" style="left:74.7px;top:392px;font-size:9px;line-height:12px;color:#5c5c5c;transform:scaleX(0.999);transform-origin:0 0;">Cash</span>
<span class="t" style="right:724px;top:392px;font-size:9px;line-height:12px;color:#707070;transform:scaleX(1.006);transform-origin:100% 0;">100.00</span>
<span class="t" style="right:671.5px;top:392px;font-size:9px;line-height:12px;color:#707070;transform:scaleX(1.006);transform-origin:100% 0;">100.00</span>
<span class="t" style="right:592px;top:392px;font-size:9px;line-height:12px;color:#707070;transform:scaleX(1.09);transform-origin:100% 0;">500,500.00</span>
<span class="t" style="left:656.7px;top:392px;font-size:9px;line-height:12px;color:#707070;transform:scaleX(1.028);transform-origin:0 0;">Holding MM (Capital)</span>
<span class="t" style="right:295.4px;top:392px;font-size:9px;line-height:12px;color:#707070;transform:scaleX(1.107);transform-origin:100% 0;">500,500</span>
<svg class="b" style="left:7.8px;top:410.15px" width="8.7" height="8.7" viewBox="0 0 10 10"><circle cx="5" cy="5" r="5" fill="#1a1a1a"/><rect x="2" y="4.050" width="6" height="1.900" fill="#fff"/></svg>
<span class="t" style="left:18.7px;top:408px;font-size:9px;line-height:12px;color:#1f1f1f;font-weight:700;transform:scaleX(1.023);transform-origin:0 0;">Investment (Capital)</span>
<svg class="b" style="left:270px;top:410.2px" width="10.5" height="8" viewBox="0 0 10.500 8"><g fill="#222"><rect x="0" y="0.200" width="1.600" height="1.500"/><rect x="0" y="3.250" width="1.600" height="1.500"/><rect x="0" y="6.300" width="1.600" height="1.500"/><rect x="3" y="0.350" width="7.500" height="1.200"/><rect x="3" y="3.400" width="7.500" height="1.200"/><rect x="3" y="6.450" width="7.500" height="1.200"/></g></svg>
<span class="t" style="right:295.4px;top:408px;font-size:9px;line-height:12px;color:#2a2a2a;font-weight:700;transform:scaleX(1.147);transform-origin:100% 0;">483,839</span>
<svg class="b" style="left:188px;top:409.5px" width="14.2" height="9.2" viewBox="0 0 14.200 9.200"><circle cx="4.600" cy="4.600" r="3.850" fill="#f7f5f5" stroke="#111" stroke-width="1.500"/><path d="M4.600 .75h5a3.850 3.850 0 0 1 0 7.700h-5" fill="none" stroke="#111" stroke-width="1.500"/></svg>
<svg class="b" style="left:19.0px;top:427.15px" width="8.7" height="8.7" viewBox="0 0 10 10"><circle cx="5" cy="5" r="5" fill="#1a1a1a"/><rect x="2" y="4.050" width="6" height="1.900" fill="#fff"/></svg>
<span class="t" style="left:29.9px;top:425px;font-size:9px;line-height:12px;color:#1f1f1f;font-weight:700;transform:scaleX(1.013);transform-origin:0 0;">Asset View</span>
<svg class="b" style="left:270px;top:427.2px" width="10.5" height="8" viewBox="0 0 10.500 8"><g fill="#222"><rect x="0" y="0.200" width="1.600" height="1.500"/><rect x="0" y="3.250" width="1.600" height="1.500"/><rect x="0" y="6.300" width="1.600" height="1.500"/><rect x="3" y="0.350" width="7.500" height="1.200"/><rect x="3" y="3.400" width="7.500" height="1.200"/><rect x="3" y="6.450" width="7.500" height="1.200"/></g></svg>
<span class="t" style="right:724px;top:425px;font-size:9px;line-height:12px;color:#2a2a2a;font-weight:700;transform:scaleX(1.053);transform-origin:100% 0;">100.00</span>
<span class="t" style="right:671.5px;top:425px;font-size:9px;line-height:12px;color:#2a2a2a;font-weight:700;transform:scaleX(1.053);transform-origin:100% 0;">100.00</span>
<span class="t" style="right:295.4px;top:425px;font-size:9px;line-height:12px;color:#2a2a2a;font-weight:700;transform:scaleX(1.147);transform-origin:100% 0;">483,839</span>
<span class="t" style="right:64px;top:425px;font-size:9px;line-height:12px;color:#2a2a2a;font-weight:700;transform:scaleX(1.039);transform-origin:100% 0;">0</span>
<svg class="b" style="left:30.2px;top:444.3px" width="8.7" height="8.7" viewBox="0 0 10 10"><circle cx="5" cy="5" r="5" fill="#1a1a1a"/><rect x="2" y="4.050" width="6" height="1.900" fill="#fff"/></svg>
<span class="t" style="left:41.1px;top:443px;font-size:9px;line-height:12px;color:#5c5c5c;transform:scaleX(1.028);transform-origin:0 0;">Cash and Equivalents</span>
<svg class="b" style="left:270px;top:444.35px" width="10.5" height="8" viewBox="0 0 10.500 8"><g fill="#222"><rect x="0" y="0.200" width="1.600" height="1.500"/><rect x="0" y="3.250" width="1.600" height="1.500"/><rect x="0" y="6.300" width="1.600" height="1.500"/><rect x="3" y="0.350" width="7.500" height="1.200"/><rect x="3" y="3.400" width="7.500" height="1.200"/><rect x="3" y="6.450" width="7.500" height="1.200"/></g></svg>
<span class="t" style="right:724px;top:443px;font-size:9px;line-height:12px;color:#707070;transform:scaleX(1.006);transform-origin:100% 0;">100.00</span>
<div class="b" style="left:521.1px;top:441px;width:53.1px;height:17px;background:#fff;border:1px solid #2e2e2e;box-sizing:border-box;"></div>
<span class="t" style="right:671.5px;top:444px;font-size:9px;line-height:12px;color:#505a5e;transform:scaleX(1.021);transform-origin:100% 0;">100.00</span>
<span class="t" style="right:295.4px;top:443px;font-size:9px;line-height:12px;color:#707070;transform:scaleX(1.107);transform-origin:100% 0;">483,839</span>
<span class="t" style="right:64px;top:443px;font-size:9px;line-height:12px;color:#707070;transform:scaleX(1.039);transform-origin:100% 0;">0</span>
<svg class="b" style="left:41.4px;top:461.2px" width="8.7" height="8.7" viewBox="0 0 10 10"><circle cx="5" cy="5" r="5" fill="#1a1a1a"/><rect x="2" y="4.050" width="6" height="1.900" fill="#fff"/></svg>
<span class="t" style="left:52.3px;top:459px;font-size:9px;line-height:12px;color:#5c5c5c;transform:scaleX(0.999);transform-origin:0 0;">Cash</span>
<svg class="b" style="left:270px;top:461.25px" width="10.5" height="8" viewBox="0 0 10.500 8"><g fill="#222"><rect x="0" y="0.200" width="1.600" height="1.500"/><rect x="0" y="3.250" width="1.600" height="1.500"/><rect x="0" y="6.300" width="1.600" height="1.500"/><rect x="3" y="0.350" width="7.500" height="1.200"/><rect x="3" y="3.400" width="7.500" height="1.200"/><rect x="3" y="6.450" width="7.500" height="1.200"/></g></svg>
<span class="t" style="right:724px;top:459px;font-size:9px;line-height:12px;color:#707070;transform:scaleX(1.006);transform-origin:100% 0;">100.00</span>
<div class="b" style="left:521.1px;top:458px;width:53.1px;height:17px;background:#f7f7f7;border:1px solid #2e2e2e;box-sizing:border-box;"></div>
<span class="t" style="right:671.5px;top:460px;font-size:9px;line-height:12px;color:#505a5e;transform:scaleX(1.021);transform-origin:100% 0;">100.00</span>
<span class="t" style="right:295.4px;top:459px;font-size:9px;line-height:12px;color:#707070;transform:scaleX(1.107);transform-origin:100% 0;">483,839</span>
<span class="t" style="right:64px;top:459px;font-size:9px;line-height:12px;color:#707070;transform:scaleX(1.039);transform-origin:100% 0;">0</span>
<svg class="b" style="left:52.6px;top:477.85px" width="8.7" height="8.7" viewBox="0 0 10 10"><circle cx="5" cy="5" r="5" fill="#1a1a1a"/><rect x="2" y="4.050" width="6" height="1.900" fill="#fff"/></svg>
<span class="t" style="left:63.5px;top:476px;font-size:9px;line-height:12px;color:#5c5c5c;transform:scaleX(0.999);transform-origin:0 0;">Cash</span>
<svg class="b" style="left:270px;top:477.9px" width="10.5" height="8" viewBox="0 0 10.500 8"><g fill="#222"><rect x="0" y="0.200" width="1.600" height="1.500"/><rect x="0" y="3.250" width="1.600" height="1.500"/><rect x="0" y="6.300" width="1.600" height="1.500"/><rect x="3" y="0.350" width="7.500" height="1.200"/><rect x="3" y="3.400" width="7.500" height="1.200"/><rect x="3" y="6.450" width="7.500" height="1.200"/></g></svg>
<span class="t" style="right:724px;top:476px;font-size:9px;line-height:12px;color:#707070;transform:scaleX(1.006);transform-origin:100% 0;">100.00</span>
<div class="b" style="left:521.1px;top:475px;width:53.1px;height:16px;background:#fff;border:1px solid #2e2e2e;box-sizing:border-box;"></div>
<span class="t" style="right:671.5px;top:477px;font-size:9px;line-height:12px;color:#505a5e;transform:scaleX(1.021);transform-origin:100% 0;">100.00</span>
<span class="t" style="right:295.4px;top:476px;font-size:9px;line-height:12px;color:#707070;transform:scaleX(1.107);transform-origin:100% 0;">483,839</span>
<span class="t" style="right:64px;top:476px;font-size:9px;line-height:12px;color:#707070;transform:scaleX(1.039);transform-origin:100% 0;">0</span>
<svg class="b" style="left:63.8px;top:494.35px" width="8.7" height="8.7" viewBox="0 0 10 10"><circle cx="5" cy="5" r="5" fill="#1a1a1a"/><rect x="2" y="4.050" width="6" height="1.900" fill="#fff"/><rect x="4.050" y="2" width="1.900" height="6" fill="#fff"/></svg>
<span class="t" style="left:74.7px;top:493px;font-size:9px;line-height:12px;color:#5c5c5c;transform:scaleX(0.999);transform-origin:0 0;">Cash</span>
<span class="t" style="right:724px;top:493px;font-size:9px;line-height:12px;color:#707070;transform:scaleX(1.006);transform-origin:100% 0;">100.00</span>
<span class="t" style="right:671.5px;top:493px;font-size:9px;line-height:12px;color:#707070;transform:scaleX(1.006);transform-origin:100% 0;">100.00</span>
<span class="t" style="right:592px;top:493px;font-size:9px;line-height:12px;color:#707070;transform:scaleX(1.09);transform-origin:100% 0;">483,838.72</span>
<span class="t" style="left:656.7px;top:493px;font-size:9px;line-height:12px;color:#707070;transform:scaleX(1.024);transform-origin:0 0;">Investment (Capital)</span>
<span class="t" style="right:295.4px;top:493px;font-size:9px;line-height:12px;color:#707070;transform:scaleX(1.107);transform-origin:100% 0;">483,839</span>
<svg class="b" style="left:7.8px;top:511.35px" width="8.7" height="8.7" viewBox="0 0 10 10"><circle cx="5" cy="5" r="5" fill="#1a1a1a"/><rect x="2" y="4.050" width="6" height="1.900" fill="#fff"/></svg>
<span class="t" style="left:18.7px;top:510px;font-size:9px;line-height:12px;color:#1f1f1f;font-weight:700;transform:scaleX(1.0);transform-origin:0 0;">Advisor Guided (Capital)</span>
<svg class="b" style="left:270px;top:511.4px" width="10.5" height="8" viewBox="0 0 10.500 8"><g fill="#222"><rect x="0" y="0.200" width="1.600" height="1.500"/><rect x="0" y="3.250" width="1.600" height="1.500"/><rect x="0" y="6.300" width="1.600" height="1.500"/><rect x="3" y="0.350" width="7.500" height="1.200"/><rect x="3" y="3.400" width="7.500" height="1.200"/><rect x="3" y="6.450" width="7.500" height="1.200"/></g></svg>
<span class="t" style="right:295.4px;top:510px;font-size:9px;line-height:12px;color:#2a2a2a;font-weight:700;transform:scaleX(1.164);transform-origin:100% 0;">112,277</span>
<svg class="b" style="left:188px;top:510.7px" width="14.2" height="9.2" viewBox="0 0 14.200 9.200"><circle cx="4.600" cy="4.600" r="3.850" fill="#f7f5f5" stroke="#111" stroke-width="1.500"/><path d="M4.600 .75h5a3.850 3.850 0 0 1 0 7.700h-5" fill="none" stroke="#111" stroke-width="1.500"/></svg>
<svg class="b" style="left:19.0px;top:528.1px" width="8.7" height="8.7" viewBox="0 0 10 10"><circle cx="5" cy="5" r="5" fill="#1a1a1a"/><rect x="2" y="4.050" width="6" height="1.900" fill="#fff"/></svg>
<span class="t" style="left:29.9px;top:526px;font-size:9px;line-height:12px;color:#1f1f1f;font-weight:700;transform:scaleX(1.013);transform-origin:0 0;">Asset View</span>
<svg class="b" style="left:270px;top:528.15px" width="10.5" height="8" viewBox="0 0 10.500 8"><g fill="#222"><rect x="0" y="0.200" width="1.600" height="1.500"/><rect x="0" y="3.250" width="1.600" height="1.500"/><rect x="0" y="6.300" width="1.600" height="1.500"/><rect x="3" y="0.350" width="7.500" height="1.200"/><rect x="3" y="3.400" width="7.500" height="1.200"/><rect x="3" y="6.450" width="7.500" height="1.200"/></g></svg>
<span class="t" style="right:724px;top:526px;font-size:9px;line-height:12px;color:#2a2a2a;font-weight:700;transform:scaleX(1.053);transform-origin:100% 0;">100.00</span>
<span class="t" style="right:671.5px;top:526px;font-size:9px;line-height:12px;color:#2a2a2a;font-weight:700;transform:scaleX(1.053);transform-origin:100% 0;">100.00</span>
<span class="t" style="right:295.4px;top:526px;font-size:9px;line-height:12px;color:#2a2a2a;font-weight:700;transform:scaleX(1.164);transform-origin:100% 0;">112,277</span>
<span class="t" style="right:64px;top:526px;font-size:9px;line-height:12px;color:#2a2a2a;font-weight:700;transform:scaleX(1.039);transform-origin:100% 0;">0</span>
<div class="b" style="left:5px;top:305px;width:201.2px;height:19px;border:solid #0b7fb4;border-width:2px 1.300px;box-sizing:border-box;border-radius:1.500px;box-shadow:0 0 1.500px .5px #a5def5, inset 0 0 1.500px .5px #c5ecfa;"></div>
<span class="t" style="left:8.6px;top:539px;font-size:9px;line-height:12px;color:#1f1f1f;font-weight:700;transform:scaleX(0.944);transform-origin:0 0;">Totals</span>
<span class="t" style="right:295.4px;top:539px;font-size:9px;line-height:12px;color:#2a2a2a;font-weight:700;transform:scaleX(1.136);transform-origin:100% 0;">1,096,616</span>
<span class="t" style="right:64px;top:539px;font-size:9px;line-height:12px;color:#2a2a2a;font-weight:700;transform:scaleX(1.039);transform-origin:100% 0;">0</span>
<div class="b" style="left:1222px;top:266.2px;width:13.3px;height:288.4px;background:#f4f4f4;"></div>
<div class="b" style="left:1223.3px;top:281px;width:9.6px;height:176px;background:#c1c1c1;"></div>
<svg class="b" style="left:1225px;top:273px" width="6" height="3.5" viewBox="0 0 6 3.500"><path d="M0 3.500 3 0l3 3.500z" fill="#a3a3a3"/></svg>
<svg class="b" style="left:1225px;top:545.5px" width="6" height="3.5" viewBox="0 0 6 3.500"><path d="M0 0h6L3 3.500z" fill="#505050"/></svg>
<div class="b" style="left:5px;top:554.6px;width:1230.3px;height:12px;background:#f1f1f1;"></div>
<div class="b" style="left:5px;top:554.1px;width:1217px;height:1px;background:#d0d0d0;"></div>
<div class="b" style="left:19.1px;top:555.5px;width:696.7px;height:10.8px;background:#c1c1c1;"></div>
<div class="b" style="left:1221.3px;top:555px;width:14px;height:11.5px;background:#dcdcdc;"></div>
<svg class="b" style="left:10.5px;top:558px" width="3.5" height="6" viewBox="0 0 3.500 6"><path d="M3.500 0v6L0 3z" fill="#a3a3a3"/></svg>
<svg class="b" style="left:1212.5px;top:558px" width="3.5" height="6" viewBox="0 0 3.500 6"><path d="M0 0v6l3.500-3z" fill="#505050"/></svg>
<div class="b" style="left:5px;top:566.3px;width:1230.3px;height:1px;background:#e2e2e2;"></div>
<div class="b" style="left:1234.8px;top:266.2px;width:0.8px;height:300px;background:#e2e2e2;"></div>
</body></html>
